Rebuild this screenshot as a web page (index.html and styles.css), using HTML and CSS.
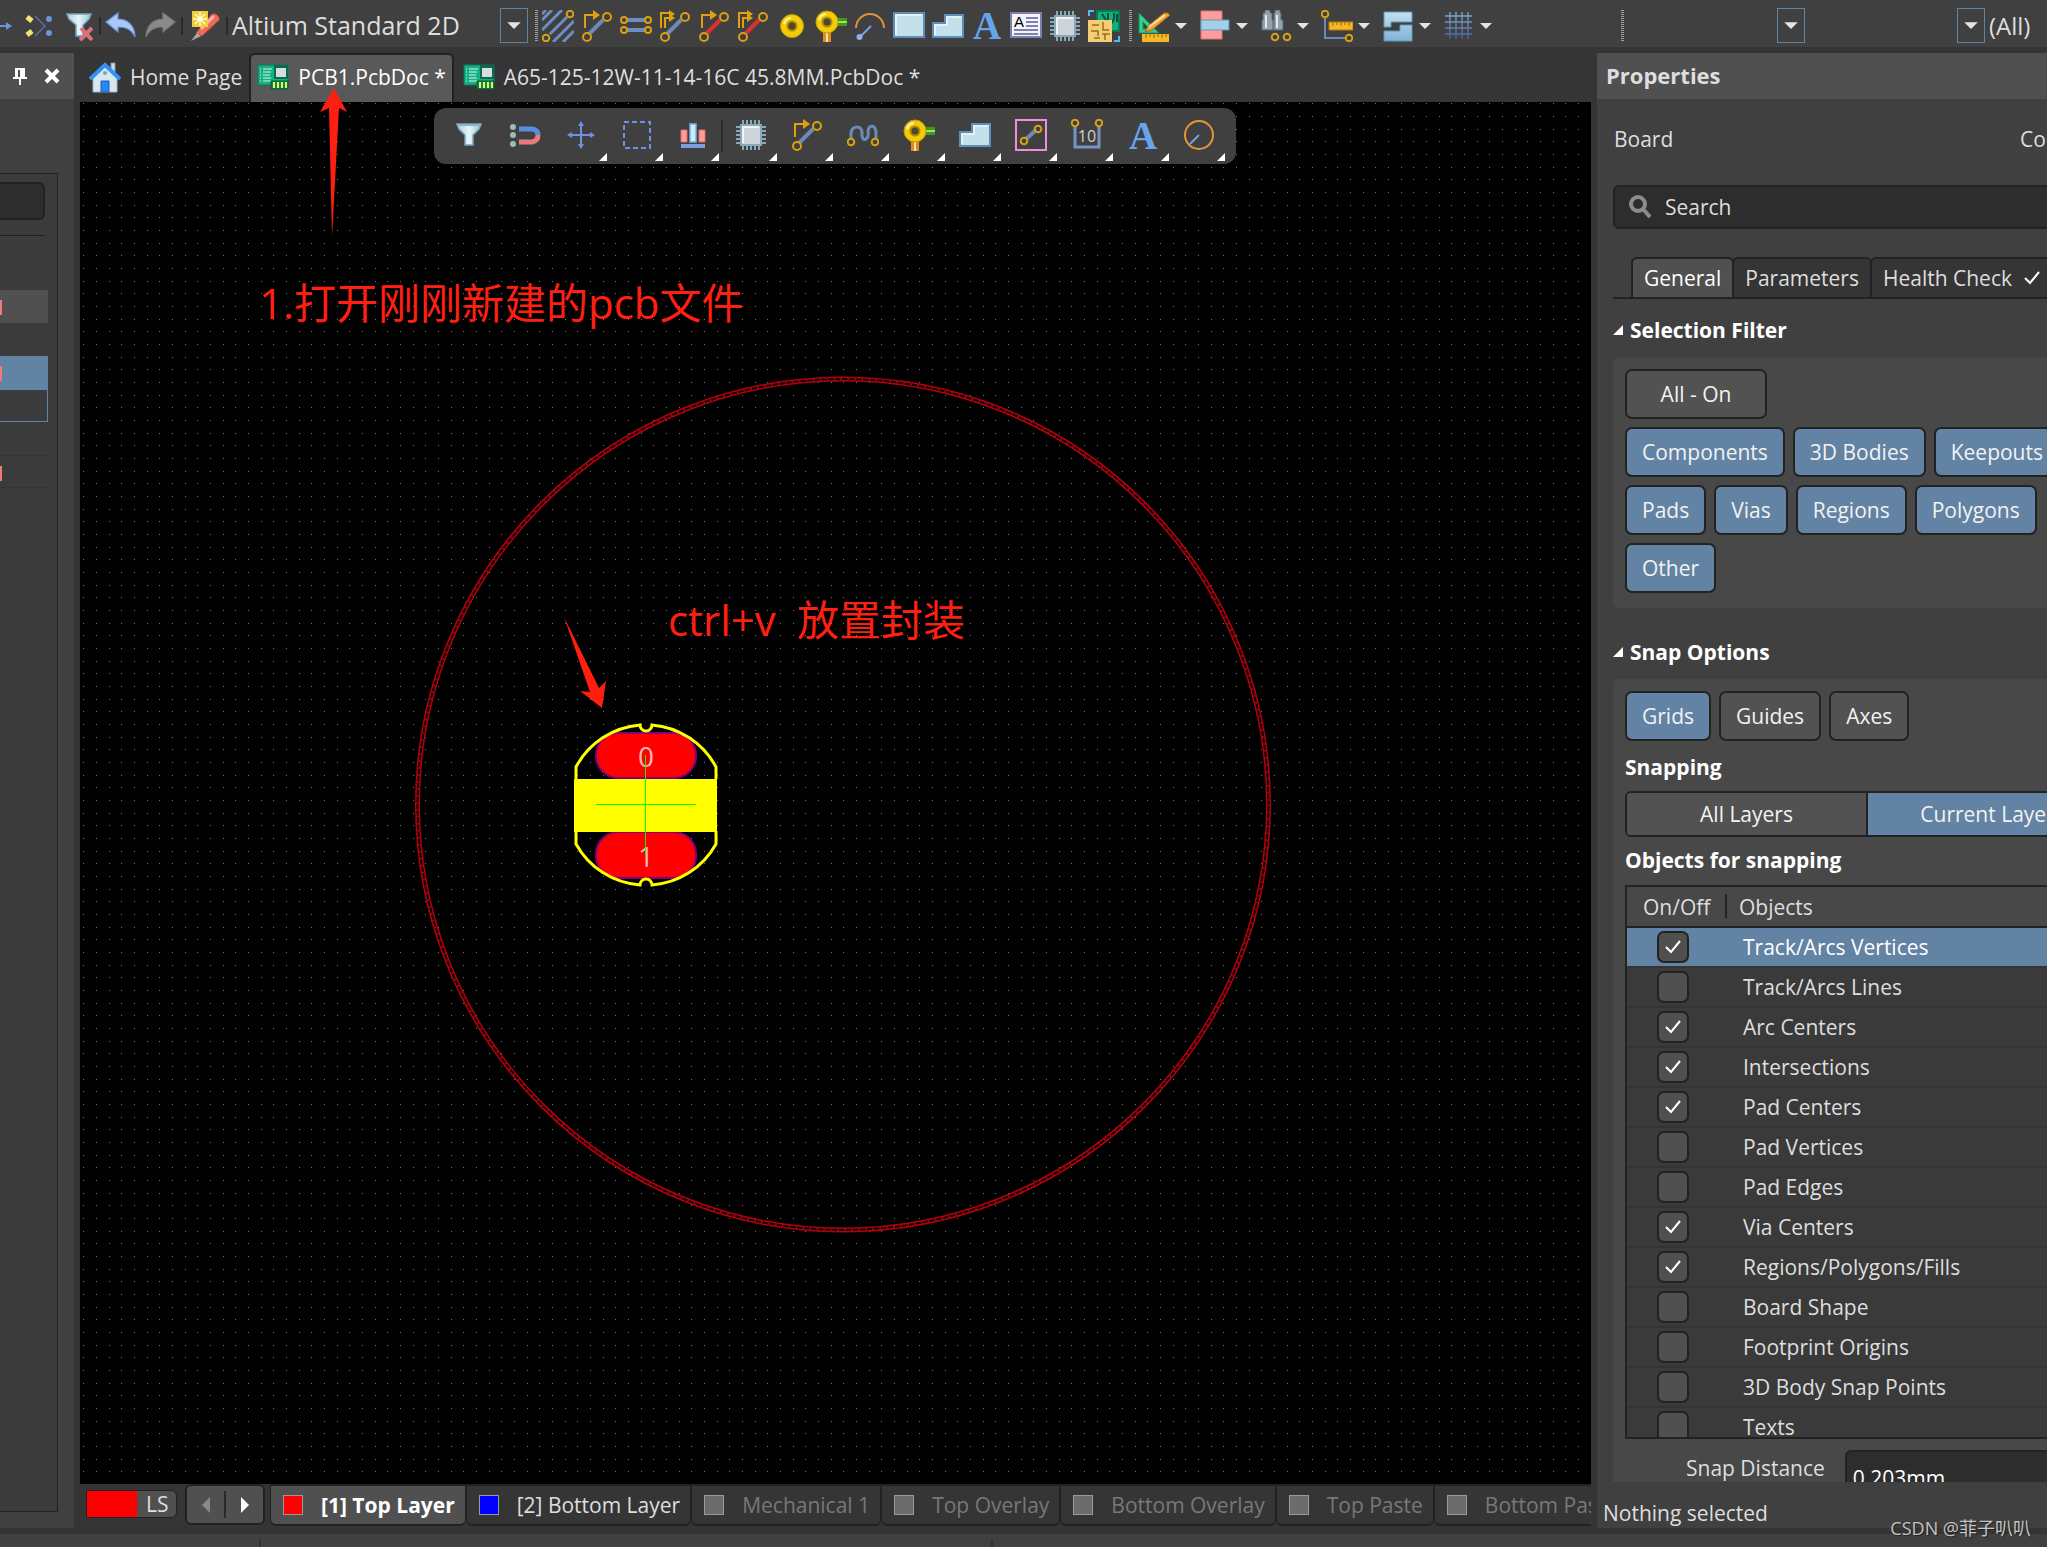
FILE: index.html
```html
<!DOCTYPE html>
<html lang="en">
<head>
<meta charset="utf-8">
<title>PCB1.PcbDoc</title>
<link rel="stylesheet" href="styles.css">
</head>
<body>
<svg class="defs" aria-hidden="true">
  <defs>
    <linearGradient id="gFunnel" x1="0" x2="1"><stop offset="0" stop-color="#a9d3dc"/><stop offset=".5" stop-color="#e6f5f8"/><stop offset="1" stop-color="#9cc6d2"/></linearGradient>
    <linearGradient id="gSteel" x1="0" y1="0" x2="0" y2="1"><stop offset="0" stop-color="#c3dff0"/><stop offset="1" stop-color="#7fb3d6"/></linearGradient>
    <linearGradient id="gGrid" gradientUnits="userSpaceOnUse" x1="0" y1="2" x2="0" y2="29"><stop offset="0" stop-color="#7fb0d0"/><stop offset="1" stop-color="#4a5fa0"/></linearGradient>
  </defs>
  <symbol id="funnel" viewBox="0 0 32 32"><path d="M4 5h24l-2 5-6 6v10h-8V16l-6-6z" fill="url(#gFunnel)" stroke="#7aa3bd" stroke-width="1.5"/><path d="M4 6h24" stroke="#8fb4ca" stroke-width="2"/></symbol>
  <symbol id="funnelx" viewBox="0 0 32 32"><path d="M3 4h24l-2 5-6 6v11h-7V15L5 9z" fill="url(#gFunnel)" stroke="#7aa3bd" stroke-width="1.5"/><path d="M17 18l11 12M28 18L16 30" stroke="#d9727a" stroke-width="4"/></symbol>
  <symbol id="nodes" viewBox="0 0 32 32"><path d="M12 6l10 10-10 10" fill="none" stroke="#5b74b8" stroke-width="1.2"/><path d="M4 7l5 4M4 25l5-4" stroke="#f0e47a" stroke-width="5"/><circle cx="26" cy="9" r="3" fill="#6d93d8"/><circle cx="26" cy="23" r="3" fill="#6d93d8"/></symbol>
  <symbol id="undo" viewBox="0 0 32 32"><path d="M1 12L13 3v6c10 0 17 7 17 18-4-8-9-10-17-10v5z" fill="#a9c8f5" stroke="#6b93dc" stroke-width="1.2"/></symbol>
  <symbol id="redo" viewBox="0 0 32 32"><path d="M31 12L19 3v6C9 9 2 16 2 27c4-8 9-10 17-10v5z" fill="#8a8a8a" stroke="#777" stroke-width="1.2"/></symbol>
  <symbol id="crayon" viewBox="0 0 32 32"><path d="M7 23L22 5q4-3 7 1t-1 6L13 26z" fill="#ee6a5a" stroke="#b8473c"/><path d="M12 19L25 6" stroke="#ffb3a8" stroke-width="3"/><path d="M2 31l6-8 4 3z" fill="#aaa"/><path d="M3 1h16v16H3z" fill="#f0cd3c"/><path d="M11 2v14M4 9h14M6 4l10 10M16 4L6 14" stroke="#fffbd0" stroke-width="1.5"/></symbol>
  <symbol id="hatch" viewBox="0 0 32 32"><path d="M0 10L10 0M0 20L20 0M8 24L25 7M11 32L32 11M21 32l11-11M0 4l4-4" stroke="#6b8fc4" stroke-width="3"/><circle cx="4" cy="28" r="3.3" class="ring"/><circle cx="28" cy="4" r="3.3" class="ring"/></symbol>
  <symbol id="route" viewBox="0 0 32 32"><path d="M8 24L22 10" stroke="#6b8ab8" stroke-width="4"/><path d="M4 18V5h12" class="gold"/><path d="M12 0l7 5-7 5z" fill="#e0a010"/><circle cx="6" cy="27" r="4" class="ring"/><circle cx="26" cy="7" r="4" class="ring"/></symbol>
  <symbol id="router" viewBox="0 0 32 32"><path d="M8 24L22 10" stroke="#dd3030" stroke-width="4"/><path d="M4 18V5h12" class="gold"/><path d="M12 0l7 5-7 5z" fill="#e0a010"/><circle cx="6" cy="27" r="4" class="ring"/><circle cx="26" cy="7" r="4" class="ring"/></symbol>
  <symbol id="diff" viewBox="0 0 32 32"><path d="M7 10h18M7 20h18" stroke="#6b8fc4" stroke-width="4"/><g class="ring"><circle cx="4" cy="10" r="3"/><circle cx="28" cy="10" r="3"/><circle cx="4" cy="20" r="3"/><circle cx="28" cy="20" r="3"/></g></symbol>
  <symbol id="multi" viewBox="0 0 32 32"><path d="M8 24L22 10" stroke="#6b8ab8" stroke-width="4"/><path d="M2 18V3h10M6 18V8h8" class="gold"/><path d="M10 0l6 4-6 4zM10 4l6 4-6 4z" fill="#e0a010"/><circle cx="6" cy="27" r="4" class="ring"/><circle cx="26" cy="7" r="4" class="ring"/></symbol>
  <symbol id="multir" viewBox="0 0 32 32"><path d="M8 24L22 10" stroke="#dd3030" stroke-width="4"/><path d="M2 18V3h10M6 18V8h8" class="gold"/><path d="M10 0l6 4-6 4zM10 4l6 4-6 4z" fill="#e0a010"/><circle cx="6" cy="27" r="4" class="ring"/><circle cx="26" cy="7" r="4" class="ring"/></symbol>
  <symbol id="pad" viewBox="0 0 32 32"><circle cx="16" cy="16" r="11.500" fill="#f2cc08" stroke="#c39a00"/><path d="M8 14a8 8 0 0 1 7-6" fill="none" stroke="#fff0b0" stroke-width="2"/><circle cx="16" cy="16" r="4.500" fill="#4a4636" stroke="#b08a00" stroke-width="2"/></symbol>
  <symbol id="via" viewBox="0 0 32 32"><path d="M20 8h12v8H20z" fill="#3f9a12"/><path d="M22 11h10v2H22z" fill="#9fe07a"/><path d="M8 20h8v12H8z" fill="#e08a1c"/><path d="M11 20h2v12h-2z" fill="#ffe0b0"/><circle cx="12" cy="12" r="11" fill="#f2cc08" stroke="#c39a00"/><path d="M4 10a8 8 0 0 1 7-6" fill="none" stroke="#fff0b0" stroke-width="2"/><circle cx="12" cy="12" r="4.500" fill="#4a4636" stroke="#b08a00" stroke-width="2"/></symbol>
  <symbol id="arc" viewBox="0 0 32 32"><path d="M2 18A14 14 0 1 1 30 18" fill="none" stroke="#e09240" stroke-width="2"/><path d="M6 27L17 16" stroke="#7aa0e8" stroke-width="2"/><circle cx="5.500" cy="27" r="3" fill="#8fb2f0"/></symbol>
  <symbol id="fill" viewBox="0 0 32 32"><path d="M1 3h30v24H1z" fill="#c4e0ea" stroke="#5f8fb8" stroke-width="2"/><path d="M3 25V5h26" fill="none" stroke="#eef8fb" stroke-width="1.500"/></symbol>
  <symbol id="region" viewBox="0 0 32 32"><path d="M1 13h12V5h18v22H1z" fill="#c4e0ea" stroke="#5f8fb8" stroke-width="2"/><path d="M3 25V15h12V7h14" fill="none" stroke="#eef8fb" stroke-width="1.500"/></symbol>
  <symbol id="chip" viewBox="0 0 32 32"><path d="M8 1v30M12 1v30M16 1v30M20 1v30M24 1v30M1 8h30M1 12h30M1 16h30M1 20h30M1 24h30" stroke="#8aa9b8" stroke-width="2"/><path d="M6 6h20v20H6z" fill="#ccd4da" stroke="#8aa9b8" stroke-width="2"/><path d="M8 24V8h16" fill="none" stroke="#f0f4f6" stroke-width="2"/></symbol>
  <symbol id="board" viewBox="0 0 32 32"><path d="M8 0h24v22H8z" fill="#12b07c"/><path d="M9 1h22v20H9z" fill="none" stroke="#0c7a56" stroke-width="2"/><path d="M14 4l4 6M20 3v8M26 3v6l-3 5M29 4v8" stroke="#06523a" stroke-width="2" fill="none"/><path d="M0 10h24v22H0z" fill="#f3cd78"/><path d="M4 15h7M15 12v8h6M3 21h7v5M14 24h8M6 28h6M17 24v6" stroke="#9c6c16" stroke-width="1.500" fill="none"/><path d="M1 6V1h5M31 26v5h-5" stroke="#58b8f0" stroke-width="2" fill="none"/></symbol>
  <symbol id="draw" viewBox="0 0 32 32"><path d="M1 3l20 20H1zM5 12v7h7z" fill="#2fd08a" fill-rule="evenodd" stroke="#17935c"/><path d="M7 22l3-6L26 3q4-1 6 2L14 20z" fill="#e8a83c" stroke="#a8650c"/><path d="M11 17L27 5" stroke="#ffe09a" stroke-width="2"/><path d="M4 24h27v8H4z" fill="#f6b828"/><path d="M8 24v4M12 24v3M16 24v4M20 24v3M24 24v4M28 24v3" stroke="#9a6a00"/></symbol>
  <symbol id="align" viewBox="0 0 32 32"><path d="M2 1h21v28H2z" fill="#ff9c9c" stroke="#e07070"/><path d="M2 10h28v10H2z" fill="#a5cfe6" stroke="#5f97bd"/></symbol>
  <symbol id="find" viewBox="0 0 32 32"><path d="M5 0h5v3h2v7h2v10H2V10h1V3h2zM15 0h5v3h1v7h2v10H13V10h1V3h1z" fill="#93a3ae" stroke="#56646e"/><path d="M6 5v13M17 5v13" stroke="#dfe8ee" stroke-width="2"/><circle cx="15" cy="27" r="3.300" class="ring"/><circle cx="27" cy="27" r="3.300" class="ring"/></symbol>
  <symbol id="measure" viewBox="0 0 32 32"><path d="M4 7v21h20" fill="none" stroke="#6b8ab8" stroke-width="2"/><path d="M8 12h24v8H8z" fill="#f6b828" stroke="#b87c08"/><path d="M12 12v4M16 12v3M20 12v4M24 12v3M28 12v4" stroke="#9a6a00"/><circle cx="4" cy="4" r="3.300" class="ring"/><circle cx="28" cy="28" r="3.300" class="ring"/></symbol>
  <symbol id="rooms" viewBox="0 0 32 32"><path d="M2 2h28v10H9v5H2zM2 21h16v-6h12v16H2z" fill="url(#gSteel)" stroke="#5f97bd" stroke-width="1"/></symbol>
  <symbol id="grid" viewBox="0 0 32 32"><path d="M7 2v27M13 2v27M19 2v27M25 2v27M2 6h27M2 12h27M2 18h27M2 24h27" stroke="url(#gGrid)" stroke-width="1.300" fill="none"/></symbol>
  <symbol id="magnet" viewBox="0 0 32 32"><circle cx="4" cy="8" r="3" fill="#9fb9c2"/><circle cx="4" cy="16" r="3" fill="#9fb9c2"/><circle cx="4" cy="25" r="3" fill="#9fb9c2"/><path d="M10 10h13q6 1 6 6" fill="none" stroke="#5b8ce0" stroke-width="5"/><path d="M10 23h13q6-1 6-7" fill="none" stroke="#e87a80" stroke-width="5"/></symbol>
  <symbol id="move" viewBox="0 0 32 32"><path d="M16 4v24M4 16h24" stroke="#7090e0" stroke-width="2"/><path d="M16 2l3 5h-6zM16 30l3-5h-6zM2 16l5-3v6zM30 16l-5-3v6z" fill="#7090e0"/></symbol>
  <symbol id="marquee" viewBox="0 0 32 32"><path d="M3 3h26v26H3z" fill="none" stroke="#6f8ff0" stroke-width="2" stroke-dasharray="5 3"/></symbol>
  <symbol id="bars" viewBox="0 0 32 32"><path d="M4 11h6v12H4zM22 11h6v12h-6z" fill="#ff9c9c" stroke="#d86c6c"/><path d="M13 5h6v18h-6z" fill="#cdeafa" stroke="#7ab4dc" stroke-width="1.500"/><path d="M4 27h24" stroke="#7a9ce0" stroke-width="4"/></symbol>
  <symbol id="tune" viewBox="0 0 32 32"><path d="M4 20v-6q1-6 6-6t5 6v3q1 5 4 3t2-8q1-5 4-5 4 1 4 7v6" fill="none" stroke="#6b8ab8" stroke-width="3"/><circle cx="4" cy="23" r="3.300" class="ring"/><circle cx="28" cy="23" r="3.300" class="ring"/></symbol>
  <symbol id="keepout" viewBox="0 0 32 32"><path d="M1 1h30v30H1z" fill="none" stroke="#f090d8" stroke-width="2"/><path d="M11 20l10-9" stroke="#6b8ab8" stroke-width="4"/><circle cx="9" cy="22" r="3.300" class="ring"/><circle cx="23" cy="10" r="3.300" class="ring"/></symbol>
  <symbol id="circle" viewBox="0 0 32 32"><circle cx="16" cy="16" r="14" fill="none" stroke="#e8963c" stroke-width="2"/><path d="M7 25l9-9" stroke="#7aa0e8" stroke-width="2"/></symbol>
  <symbol id="house" viewBox="0 0 32 32"><path d="M22 2h4v10h-4z" fill="#c8dce8" stroke="#7f9aa8"/><path d="M4 14L16 4l12 10v17H4z" fill="#d8e6f2" stroke="#9ab4c8"/><path d="M1 18L16 4l15 14" fill="none" stroke="#3592f5" stroke-width="4"/><path d="M12 20h8v11h-8z" fill="#2a86f0" stroke="#1660b8"/><circle cx="16" cy="12" r="2" fill="#7aa3b5"/></symbol>
  <symbol id="doc" viewBox="0 0 32 32"><path d="M1 4h30v20H1z" fill="#14b088" stroke="#0a7a58"/><path d="M3 8h1M6 8h9M3 11h1M6 11h8M3 14h1M6 14h7M3 17h1M6 17h8M3 20h1M6 20h8" stroke="#d8f8d8" stroke-width="1.200"/><path d="M17 4h14v14H17z" fill="#0a6a4c"/><path d="M19 7h10v9H19z" fill="#d8dcdc"/><path d="M14 20h17v8H14z" fill="#0a8a48" stroke="#0a5a30"/><path d="M17 21v6M21 21v6M25 21v6M29 21v6" stroke="#e8f060" stroke-width="2"/></symbol>
  <symbol id="tick" viewBox="0 0 16 16"><path d="M1 8l5 5L15 2" fill="none" stroke="#fff" stroke-width="2"/></symbol>
  <symbol id="down" viewBox="0 0 12 8"><path d="M0 1h12L6 7z" fill="#e4e4e4"/></symbol>
</svg>

<header class="toolbar">
  <button class="tb cut" aria-label="Move"><svg class="ic"><path d="M0 16h8" stroke="#7090e0" stroke-width="2"/><path d="M6 12l6 4-6 4z" fill="#7090e0"/></svg></button>
  <button class="tb wide" aria-label="Cross select"><svg class="ic"><use href="#nodes"/></svg></button>
  <button class="tb" aria-label="Clear filter"><svg class="ic"><use href="#funnelx"/></svg></button>
  <span class="sep"></span>
  <button class="tb" aria-label="Undo"><svg class="ic"><use href="#undo"/></svg></button>
  <button class="tb" aria-label="Redo"><svg class="ic"><use href="#redo"/></svg></button>
  <span class="sep gap"></span>
  <button class="tb" aria-label="Highlight"><svg class="ic"><use href="#crayon"/></svg></button>
  <span class="sep gap"></span>
  <span class="combo view"><select aria-label="View configuration"><option>Altium Standard 2D</option></select><i><svg><use href="#down"/></svg></i></span>
  <span class="grip"></span>
  <button class="tb" aria-label="Hatch"><svg class="ic"><use href="#hatch"/></svg></button>
  <button class="tb" aria-label="Route"><svg class="ic"><use href="#route"/></svg></button>
  <button class="tb" aria-label="Differential pair"><svg class="ic"><use href="#diff"/></svg></button>
  <button class="tb" aria-label="Multi route"><svg class="ic"><use href="#multi"/></svg></button>
  <button class="tb" aria-label="Track"><svg class="ic"><use href="#router"/></svg></button>
  <button class="tb" aria-label="Multi track"><svg class="ic"><use href="#multir"/></svg></button>
  <button class="tb" aria-label="Pad"><svg class="ic"><use href="#pad"/></svg></button>
  <button class="tb" aria-label="Via"><svg class="ic"><use href="#via"/></svg></button>
  <button class="tb" aria-label="Arc"><svg class="ic"><use href="#arc"/></svg></button>
  <button class="tb" aria-label="Fill"><svg class="ic"><use href="#fill"/></svg></button>
  <button class="tb" aria-label="Region"><svg class="ic"><use href="#region"/></svg></button>
  <button class="tb" aria-label="String"><svg class="ic"><text x="16" y="29" text-anchor="middle" class="glyphA">A</text></svg></button>
  <button class="tb" aria-label="Text frame"><svg class="ic"><path d="M1 3h30v24H1z" fill="#f4f4fa" stroke="#7a80b0" stroke-width="2"/><path d="M16 8h12M16 12h12M16 16h12M4 20h24M4 24h24" stroke="#7a80b0" stroke-width="2"/><text x="9" y="17" text-anchor="middle" class="glyphF">A</text></svg></button>
  <button class="tb" aria-label="Component"><svg class="ic"><use href="#chip"/></svg></button>
  <button class="tb" aria-label="Board array"><svg class="ic"><use href="#board"/></svg></button>
  <span class="grip"></span>
  <button class="tb drop" aria-label="Drawing tools"><svg class="ic"><use href="#draw"/></svg><svg class="dn"><use href="#down"/></svg></button>
  <button class="tb drop" aria-label="Align"><svg class="ic"><use href="#align"/></svg><svg class="dn"><use href="#down"/></svg></button>
  <button class="tb drop" aria-label="Find"><svg class="ic"><use href="#find"/></svg><svg class="dn"><use href="#down"/></svg></button>
  <button class="tb drop" aria-label="Dimension"><svg class="ic"><use href="#measure"/></svg><svg class="dn"><use href="#down"/></svg></button>
  <button class="tb drop" aria-label="Rooms"><svg class="ic"><use href="#rooms"/></svg><svg class="dn"><use href="#down"/></svg></button>
  <button class="tb drop" aria-label="Grids"><svg class="ic"><use href="#grid"/></svg><svg class="dn"><use href="#down"/></svg></button>
  <span class="filters">
    <span class="grip"></span>
    <span class="combo mask"><select aria-label="Filter one"></select><i><svg><use href="#down"/></svg></i></span>
    <span class="combo scope"><select aria-label="Filter two"></select><i><svg><use href="#down"/></svg></i></span>
    <span class="all">(All)</span>
  </span>
</header>

<div class="work">
  <aside class="side">
    <div class="sidehead">
      <button aria-label="Pin"><svg width="16" height="20"><path d="M4 2h9v9h2v2H1v-2h2V2zm2 2v7h2V4z" fill="#fff" fill-rule="evenodd"/><path d="M7 13h2v6H7z" fill="#fff"/></svg></button>
      <button aria-label="Close"><svg width="16" height="16"><path d="M2 2l12 12M14 2L2 14" stroke="#fff" stroke-width="4"/></svg></button>
    </div>
    <div class="sidebox">
      <input class="sidefind" aria-label="Filter">
      <hr>
      <ul class="tree"><li class="hd"><b></b></li><li></li><li class="on"><b></b></li><li class="ol"></li><li></li><li class="ln"><b></b></li></ul>
    </div>
  </aside>

  <main class="editor">
    <nav class="docs">
      <button class="doc home"><svg class="ic"><use href="#house"/></svg>Home Page</button>
      <button class="doc active"><svg class="ic"><use href="#doc"/></svg>PCB1.PcbDoc *</button>
      <button class="doc"><svg class="ic"><use href="#doc"/></svg>A65-125-12W-11-14-16C 45.8MM.PcbDoc *</button>
    </nav>
    <section class="canvas">
      <svg class="pcb">
        <defs><pattern id="dots" width="38" height="38" patternUnits="userSpaceOnUse" x="3" y="1"><path d="M0 0h1v1H0zM13 0h1v1h-1zM26 0h1v1h-1zM0 13h1v1H0zM13 13h1v1h-1zM26 13h1v1h-1zM0 26h1v1H0zM13 26h1v1h-1zM26 26h1v1h-1z" fill="#747474"/></pattern></defs>
        <rect width="100%" height="100%" fill="url(#dots)"/>
        <g transform="translate(-80 -102)">
          <circle cx="843" cy="804.500" r="425.500" fill="none" stroke="#b4000e" stroke-width="5"/>
          <circle cx="843" cy="804.500" r="425.500" fill="none" stroke="#000" stroke-width="2"/>
          <circle cx="843" cy="804.500" r="425.500" fill="none" stroke="#a0000e" stroke-width="2" stroke-dasharray="2 5"/>
          <rect x="596" y="733" width="100" height="45" rx="22" fill="#f00" stroke="#800080" stroke-width="2"/>
          <rect x="596" y="832" width="100" height="46" rx="22" fill="#f00" stroke="#800080" stroke-width="2"/>
          <path d="M574 779h143v53H574z" fill="#ff0"/>
          <path d="M576 779V767A80 80 0 0 1 640 725A6 6 0 0 0 652 725A80 80 0 0 1 716 767V779M576 831V844A80 80 0 0 0 640 885A6 6 0 0 1 652 885A80 80 0 0 0 716 844V831" fill="none" stroke="#ff0" stroke-width="3"/>
          <text x="646" y="767" text-anchor="middle" class="padno">0</text>
          <text x="646" y="867" text-anchor="middle" class="padno">1</text>
          <path d="M596 804.500h100M645.500 755v100" stroke="#0f0"/>
          <path d="M334 88l13 24-8-4-7 129-3-129-9 4z" fill="#ff1f10"/>
          <path d="M564 617l35 71 7-7-4 27-22-17 10 1z" fill="#ff1f10"/>
          <text x="259" y="319" class="note">1.打开刚刚新建的pcb文件</text>
          <text x="668" y="636" class="note">ctrl+v</text>
          <text x="797" y="636" class="note">放置封装</text>
        </g>
      </svg>
      <div class="float">
        <button aria-label="Filter"><svg class="ic"><use href="#funnel"/></svg></button>
        <button aria-label="Snap"><svg class="ic"><use href="#magnet"/></svg></button>
        <button class="more" aria-label="Move"><svg class="ic"><use href="#move"/></svg></button>
        <button class="more" aria-label="Select"><svg class="ic"><use href="#marquee"/></svg></button>
        <button class="more" aria-label="Align"><svg class="ic"><use href="#bars"/></svg></button>
        <span class="sep"></span>
        <button class="more" aria-label="Component"><svg class="ic"><use href="#chip"/></svg></button>
        <button class="more" aria-label="Route"><svg class="ic"><use href="#route"/></svg></button>
        <button class="more" aria-label="Tune"><svg class="ic"><use href="#tune"/></svg></button>
        <button class="more" aria-label="Via"><svg class="ic"><use href="#via"/></svg></button>
        <button class="more" aria-label="Polygon"><svg class="ic"><use href="#region"/></svg></button>
        <button class="more" aria-label="Keepout"><svg class="ic"><use href="#keepout"/></svg></button>
        <button class="more" aria-label="Dimension"><svg class="ic"><path d="M4 7v21h24V7" fill="none" stroke="#7a94c8" stroke-width="3"/><text x="16" y="23" text-anchor="middle" class="glyphT">10</text><circle cx="4" cy="4" r="3.300" class="ring"/><circle cx="28" cy="4" r="3.300" class="ring"/></svg></button>
        <button class="more" aria-label="String"><svg class="ic"><text x="16" y="30" text-anchor="middle" class="glyphA">A</text></svg></button>
        <button class="more" aria-label="Arc"><svg class="ic"><use href="#circle"/></svg></button>
      </div>
    </section>
    <nav class="layers">
      <button class="ls"><i></i>LS</button>
      <span class="step"><button aria-label="Previous layer"><svg width="10" height="16"><path d="M9 0v16L1 8z" fill="#8a8a8a"/></svg></button><button aria-label="Next layer"><svg width="10" height="16"><path d="M1 0v16l8-8z" fill="#fff"/></svg></button></span>
      <button class="layer cur"><i class="red"></i>[1] Top Layer</button>
      <button class="layer lit"><i class="blue"></i>[2] Bottom Layer</button>
      <button class="layer"><i></i>Mechanical 1</button>
      <button class="layer"><i></i>Top Overlay</button>
      <button class="layer"><i></i>Bottom Overlay</button>
      <button class="layer"><i></i>Top Paste</button>
      <button class="layer"><i></i>Bottom Paste</button>
    </nav>
  </main>

  <aside class="props">
    <h1>Properties</h1>
    <div class="scroll">
      <div class="kind"><span>Board</span><span>Components</span></div>
      <label class="search"><svg width="24" height="24"><circle cx="9" cy="9" r="7" fill="none" stroke="#8c8c8c" stroke-width="4"/><path d="M14 14l7 8" stroke="#8c8c8c" stroke-width="4"/></svg><input placeholder="Search" aria-label="Search"></label>
      <div class="tabs"><button class="on">General</button><button>Parameters</button><button>Health Check <svg width="16" height="16"><use href="#tick"/></svg></button></div>
      <h2>Selection Filter</h2>
      <div class="group chips">
        <div class="row"><button class="chip allon">All - On</button></div>
        <div class="row"><button class="chip on">Components</button><button class="chip on">3D Bodies</button><button class="chip on">Keepouts</button></div>
        <div class="row"><button class="chip on">Pads</button><button class="chip on">Vias</button><button class="chip on">Regions</button><button class="chip on">Polygons</button></div>
        <div class="row"><button class="chip on">Other</button></div>
      </div>
      <h2 class="next">Snap Options</h2>
      <div class="group snap">
        <div class="row"><button class="chip on">Grids</button><button class="chip">Guides</button><button class="chip">Axes</button></div>
        <h3>Snapping</h3>
        <div class="seg"><button>All Layers</button><button class="on">Current Layer</button></div>
        <h3>Objects for snapping</h3>
        <div class="tablebox">
          <table>
            <thead><tr><th>On/Off</th><th>Objects</th></tr></thead>
            <tbody>
              <tr class="on"><td><input type="checkbox" id="o1" checked></td><td><label for="o1">Track/Arcs Vertices</label></td></tr>
              <tr><td><input type="checkbox" id="o2"></td><td><label for="o2">Track/Arcs Lines</label></td></tr>
              <tr><td><input type="checkbox" id="o3" checked></td><td><label for="o3">Arc Centers</label></td></tr>
              <tr><td><input type="checkbox" id="o4" checked></td><td><label for="o4">Intersections</label></td></tr>
              <tr><td><input type="checkbox" id="o5" checked></td><td><label for="o5">Pad Centers</label></td></tr>
              <tr><td><input type="checkbox" id="o6"></td><td><label for="o6">Pad Vertices</label></td></tr>
              <tr><td><input type="checkbox" id="o7"></td><td><label for="o7">Pad Edges</label></td></tr>
              <tr><td><input type="checkbox" id="o8" checked></td><td><label for="o8">Via Centers</label></td></tr>
              <tr><td><input type="checkbox" id="o9" checked></td><td><label for="o9">Regions/Polygons/Fills</label></td></tr>
              <tr><td><input type="checkbox" id="o10"></td><td><label for="o10">Board Shape</label></td></tr>
              <tr><td><input type="checkbox" id="o11"></td><td><label for="o11">Footprint Origins</label></td></tr>
              <tr><td><input type="checkbox" id="o12"></td><td><label for="o12">3D Body Snap Points</label></td></tr>
              <tr><td><input type="checkbox" id="o13"></td><td><label for="o13">Texts</label></td></tr>
            </tbody>
          </table>
        </div>
        <div class="dist"><label for="sd">Snap Distance</label><input id="sd" value="0.203mm"></div>
      </div>
    </div>
    <footer>Nothing selected</footer>
  </aside>
</div>
<div class="status"><span></span><span></span></div>
<div class="mark">CSDN @菲子叭叭</div>
</body>
</html>
```

FILE: styles.css
```css
* { box-sizing: border-box; }
body {
  margin: 0;
  height: 100vh;
  display: flex;
  flex-direction: column;
  overflow: hidden;
  background: #353535;
  color: #dedede;
  font: 21px/30px "Open Sans", "Noto Sans CJK SC", sans-serif;
}
button, input, select {
  font: inherit;
  color: inherit;
  background: none;
  border: 0;
  padding: 0;
  margin: 0;
  border-radius: 0;
}
button { white-space: nowrap; }
svg { display: block; flex: none; }
.defs { position: absolute; width: 0; height: 0; }
.ic { width: 32px; height: 32px; }
.ring { fill: none; stroke: #d9a010; stroke-width: 2; }
.gold { fill: none; stroke: #e0a010; stroke-width: 2; }
.glyphA { font: bold 39px "Liberation Serif", serif; fill: #68a4ec; }
.glyphF { font: 15px "Liberation Sans", sans-serif; fill: #000; }
.glyphT { font: 16px "Open Sans", sans-serif; fill: #d0d0d0; }

/* main toolbar */
.toolbar {
  display: flex;
  align-items: center;
  flex: none;
  height: 47px;
  padding-top: 4px;
  background: #404040;
}
.tb { width: 39px; display: flex; justify-content: center; flex: none; }
.tb.cut { width: 18px; justify-content: flex-start; }
.tb.wide { width: 42px; }
.sep { width: 2px; height: 18px; background: #2a2a2a; flex: none; }
.sep.gap { margin: 0 2px; }
.grip {
  width: 3px;
  height: 32px;
  margin-left: 6px;
  flex: none;
  background: repeating-linear-gradient(#a0a0a0 0 1px, #404040 1px 2px);
}
.tb.drop { width: 61px; gap: 5px; align-items: center; }
.dn { width: 12px; height: 8px; }
.combo { position: relative; flex: none; }
.combo select { appearance: none; width: 100%; height: 35px; display: block; font-size: 25px; line-height: 35px; padding-left: 2px; }
.combo i {
  position: absolute;
  right: 0;
  top: 0;
  width: 28px;
  height: 35px;
  border: 1px solid #5f83a3;
  display: flex;
  align-items: center;
  justify-content: center;
  pointer-events: none;
}
.combo i svg { width: 14px; height: 9px; }
.view { width: 298px; margin-right: 1px; }
.filters { display: flex; align-items: center; margin-left: auto; width: 432px; }
.mask { width: 181px; }
.scope { width: 180px; }
.all { font-size: 24px; margin-left: 4px; }

/* columns */
.work { flex: 1; min-height: 0; display: grid; grid-template-columns: 74px minmax(0, 1fr) 450px; gap: 6px; padding: 6px 0; }
.side { background: #404040; display: flex; flex-direction: column; }
.sidehead { height: 46px; background: #505050; display: flex; align-items: center; gap: 16px; padding-left: 12px; flex: none; }
.sidebox { flex: 1; margin: 74px 16px 16px 0; border: 1px solid #222; border-left: 0; background: #3b3b3b; }
.sidefind { width: 45px; height: 38px; margin-top: 8px; display: block; background: #2d2d2d; border: 2px solid #222; border-left: 0; border-radius: 0 6px 6px 0; }
.sidebox hr { width: 45px; height: 1px; border: 0; background: #222; margin: 15px 0 54px; }
.tree { list-style: none; margin: 0; padding: 0; width: 48px; }
.tree li { height: 33px; padding-top: 10px; }
.tree b { display: block; width: 2px; height: 15px; background: #f07a78; }
.tree .hd { background: #505050; }
.tree .on { background: #6283a3; }
.tree .ol { border: 1px solid #6283a3; border-left: 0; }
.tree .ln { border: solid #343434; border-width: 1px 0; }

.editor { display: flex; flex-direction: column; min-width: 0; }
.docs { display: flex; height: 49px; flex: none; }
.doc { display: flex; align-items: center; gap: 9px; padding: 0 9px 2px; }
.doc.home { padding-right: 7px; }
.doc.active { background: #595959; color: #fff; border: 2px solid #222; border-bottom: 0; border-radius: 6px 6px 0 0; padding: 0 6px 3px; }
.canvas { position: relative; flex: 1; min-height: 0; background: #000; }
.pcb { position: absolute; width: 100%; height: 100%; overflow: visible; }
.note { font: 42px "Open Sans", "Noto Sans CJK SC", sans-serif; fill: #ff1f10; }
.padno { font: 28px "Open Sans", sans-serif; fill: #ffb4b4; }
.float {
  position: absolute;
  left: 354px;
  top: 6px;
  height: 56px;
  padding: 0 9px 0 7px;
  display: flex;
  align-items: center;
  background: #404040;
  border-radius: 12px;
}
.float button { width: 56px; height: 56px; display: flex; align-items: center; justify-content: center; position: relative; padding-bottom: 2px; }
.float .sep { height: 32px; }
.more::after { content: ""; position: absolute; right: 2px; bottom: 3px; width: 8px; height: 8px; background: #fff; clip-path: polygon(100% 0, 100% 100%, 0 100%); }

.layers { height: 44px; flex: none; display: flex; align-items: flex-start; overflow: hidden; }
.layers i { flex: none; }
.ls { flex: none; width: 91px; height: 28px; margin: 6px 8px 0 6px; display: flex; align-items: center; background: #505050; border: 1px solid #222; border-radius: 0 6px 6px 0; gap: 9px; }
.ls i { width: 50px; height: 26px; background: #f00; }
.step { display: flex; width: 80px; height: 41px; margin-right: 5px; background: #505050; border: 2px solid #222; border-radius: 6px; flex: none; }
.step button { flex: 1; display: flex; align-items: center; justify-content: center; margin: 5px 0; }
.step button + button { border-left: 2px solid #2a2a2a; }
.layer { display: flex; align-items: center; flex: none; height: 42px; gap: 18px; padding: 0 10px 0 12px; border: 2px solid #222; border-left-width: 1px; border-right-width: 1px; border-radius: 0 0 6px 6px; color: #787878; }
.layer i { width: 20px; height: 20px; background: #6c6c6c; border: 1px solid #999; }
.layer .red { background: #f00; }
.layer .blue { background: #00f; }
.layer.cur { background: #505050; color: #fff; font-weight: bold; }
.layer.lit { color: #dedede; }

/* properties */
.props { background: #404040; display: flex; flex-direction: column; overflow: hidden; }
.props h1 { flex: none; margin: 0; height: 46px; padding-left: 9px; background: #505050; font-size: 22px; line-height: 44px; }
.scroll { flex: 1; min-height: 0; overflow: hidden; padding-left: 16px; }
.kind { display: flex; padding: 25px 0 31px 1px; white-space: nowrap; }
.kind span { flex: none; width: 406px; }
.search { display: flex; align-items: center; width: 520px; height: 44px; gap: 12px; padding-left: 14px; background: #2d2d2d; border: 2px solid #222; border-radius: 6px; }
.search input { flex: 1; }
.search input::placeholder { color: #dedede; opacity: 1; }
.tabs { display: flex; width: 520px; margin-top: 28px; padding-left: 18px; border-bottom: 2px solid #222; }
.tabs button { height: 40px; padding: 0 11px; background: #353535; border: 2px solid #222; border-bottom: 0; border-radius: 6px 6px 0 0; margin-right: -2px; display: flex; align-items: center; gap: 12px; }
.tabs .on { background: #505050; color: #fff; }
.scroll h2 { margin: 16px 0 12px; font-size: 21px; line-height: 30px; color: #fff; display: flex; align-items: center; gap: 7px; }
.scroll h2.next { margin-top: 29px; }
.scroll h2::before { content: ""; width: 10px; height: 10px; background: #fff; clip-path: polygon(100% 0, 100% 100%, 0 100%); }
.group { width: 520px; padding: 12px; background: #484848; border-radius: 6px; }
.chips { display: flex; flex-direction: column; gap: 8px; padding-bottom: 15px; }
.row { display: flex; gap: 8px; }
.chip { height: 50px; padding: 0 15px; background: #525252; border: 2px solid #222; border-radius: 7px; color: #f2f2f2; flex: none; }
.chip.on { background: #6283a3; }
.allon { width: 142px; }
.group h3 { margin: 11px 0 9px; font-size: 21px; line-height: 30px; color: #fff; }
.seg + h3 { margin-top: 8px; }
.seg { display: flex; height: 46px; border: 2px solid #222; border-radius: 6px; overflow: hidden; width: 484px; }
.seg button { flex: 1; background: #525252; color: #f2f2f2; }
.seg .on { background: #6283a3; border-left: 2px solid #222; }
.tablebox { height: 554px; border: 2px solid #222; background: #3a3a3a; overflow: hidden; width: 484px; margin-top: 10px; }
table { width: 100%; border-collapse: collapse; table-layout: fixed; }
th { height: 40px; padding: 0 0 0 16px; background: #484848; border-bottom: 2px solid #222; font-weight: normal; text-align: left; }
th:first-child { width: 98px; }
th + th { padding-left: 14px; background: linear-gradient(#222, #222) 0 7px / 2px 24px no-repeat, #484848; }
td { height: 40px; padding: 0 0 0 18px; border-bottom: 2px solid #343434; }
td:first-child { padding-left: 30px; }
tr.on { background: #6283a3; color: #fff; }
td input { appearance: none; display: block; width: 32px; height: 32px; background: #505050; border: 2px solid #222; border-radius: 7px; }
td input:checked { background: #505050 url("data:image/svg+xml,%3Csvg xmlns='http://www.w3.org/2000/svg' viewBox='0 0 28 28'%3E%3Cpath d='M7 14l5 5 9-11' fill='none' stroke='%23fff' stroke-width='2'/%3E%3C/svg%3E"); }
.dist { display: flex; gap: 20px; margin-top: 11px; padding-left: 61px; }
.dist label { line-height: 36px; }
.dist input { width: 240px; height: 50px; padding: 6px 6px 0; background: #2d2d2d; border: 2px solid #222; border-radius: 6px; color: #fff; }
.props footer { flex: none; height: 46px; padding: 0 6px; line-height: 62px; color: #dedede; }

.status { flex: none; height: 13px; background: #404040; display: flex; gap: 730px; padding: 5px 0 0 259px; }
.status span { width: 2px; background: #303030; flex: none; }
.mark { position: absolute; right: 16px; bottom: 5px; font-size: 18px; line-height: 28px; color: #c4c4c4; text-shadow: 1px 1px 1px #222; }
```
